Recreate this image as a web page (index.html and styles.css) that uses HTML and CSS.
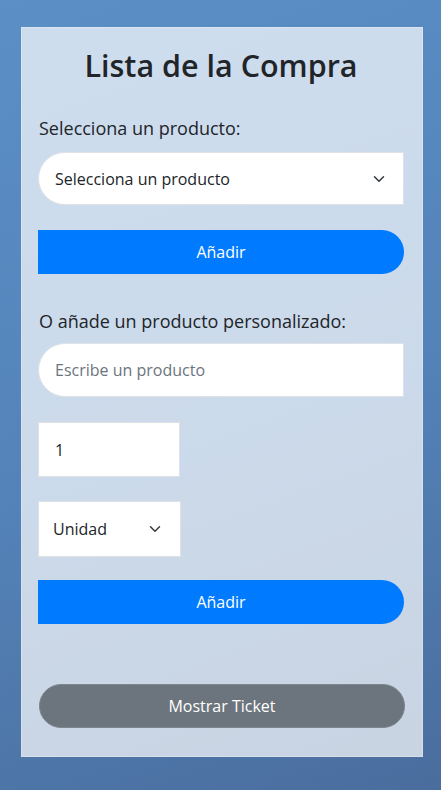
FILE: index.html
```html
<!DOCTYPE html>
<html lang="es">
<head>
<meta charset="utf-8">
<title>Lista de la Compra</title>
<link rel="stylesheet" href="styles.css">
</head>
<body>
<div class="card">
  <h1 class="title">Lista de la Compra</h1>
  <label class="label label-first">Selecciona un producto:</label>
  <select class="select select-product">
    <option>Selecciona un producto</option>
  </select>
  <button class="btn btn-add btn-add-first">Añadir</button>
  <label class="label label-second">O añade un producto personalizado:</label>
  <input class="input input-text" type="text" placeholder="Escribe un producto">
  <input class="input input-qty" type="number" value="1">
  <select class="select select-unit">
    <option>Unidad</option>
  </select>
  <button class="btn btn-add btn-add-second">Añadir</button>
  <button class="btn btn-ticket">Mostrar Ticket</button>
</div>
</body>
</html>
```
FILE: styles.css
```css
html, body {
  margin: 0;
  padding: 0;
}
body {
  width: 441px;
  height: 790px;
  overflow: hidden;
  background: linear-gradient(160deg, #5b8fc6 0%, #5382b8 55%, #4a6d9d 100%);
  font-family: "Open Sans", "Noto Sans", sans-serif;
  color: #212529;
}
.card {
  box-sizing: border-box;
  margin: 27px 0 0 21px;
  width: 402px;
  padding: 15px 18px 28px 16px;
  background: rgba(255, 255, 255, 0.7);
  border: 1px solid rgba(255, 255, 255, 0.25);
  display: flex;
  flex-direction: column;
  align-items: flex-start;
}
.title {
  align-self: stretch;
  margin: 0;
  text-align: center;
  font-size: 30.5px;
  line-height: 44px;
  font-weight: 600;
  color: #212529;
}
.label {
  display: block;
  font-size: 18px;
  line-height: 24px;
  padding-left: 1px;
}
.label-first { margin-top: 29px; }
.label-second { margin-top: 35px; }
.select, .input {
  box-sizing: border-box;
  font-family: inherit;
  font-size: 16px;
  color: #212529;
  background-color: #fff;
  border: 1px solid #dee2e6;
  outline: none;
  margin: 0;
}
.select {
  appearance: none;
  -webkit-appearance: none;
  background-image: url("data:image/svg+xml,%3csvg xmlns='http://www.w3.org/2000/svg' viewBox='0 0 16 16'%3e%3cpath fill='none' stroke='%23343a40' stroke-linecap='round' stroke-linejoin='round' stroke-width='2' d='m2 5 6 6 6-6'/%3e%3c/svg%3e");
  background-repeat: no-repeat;
  background-size: 16px 12px;
}
.select-product {
  align-self: stretch;
  margin-top: 12px;
  height: 53px;
  padding: 0 40px 0 16px;
  border-radius: 27px 0 0 27px;
  background-position: right 16px center;
}
.input-text {
  align-self: stretch;
  margin-top: 10px;
  height: 54px;
  padding: 0 16px;
  border-radius: 27px 0 0 27px;
}
.input-text::placeholder { color: #6c757d; }
.input-qty {
  margin-top: 25px;
  width: 142px;
  height: 55px;
  padding: 0 16px;
  border-radius: 0;
  -moz-appearance: textfield;
}
.input-qty::-webkit-inner-spin-button,
.input-qty::-webkit-outer-spin-button { -webkit-appearance: none; margin: 0; }
.select-unit {
  margin-top: 24px;
  width: 143px;
  height: 56px;
  padding: 0 36px 0 14px;
  border-radius: 0;
  background-position: right 17px center;
}
.btn {
  box-sizing: border-box;
  align-self: stretch;
  height: 44px;
  margin: 0;
  font-family: inherit;
  font-size: 16px;
  color: #fff;
  border: none;
  cursor: pointer;
}
.btn-add {
  background: #007bff;
  border-radius: 0 22px 22px 0;
}
.btn-add-first { margin-top: 25px; }
.btn-add-second { margin-top: 23px; }
.btn-ticket {
  margin-top: 60px;
  margin-left: 1px;
  margin-right: -1px;
  background: #6c757d;
  border: 1px solid #7d868e;
  border-radius: 22px;
}
```
